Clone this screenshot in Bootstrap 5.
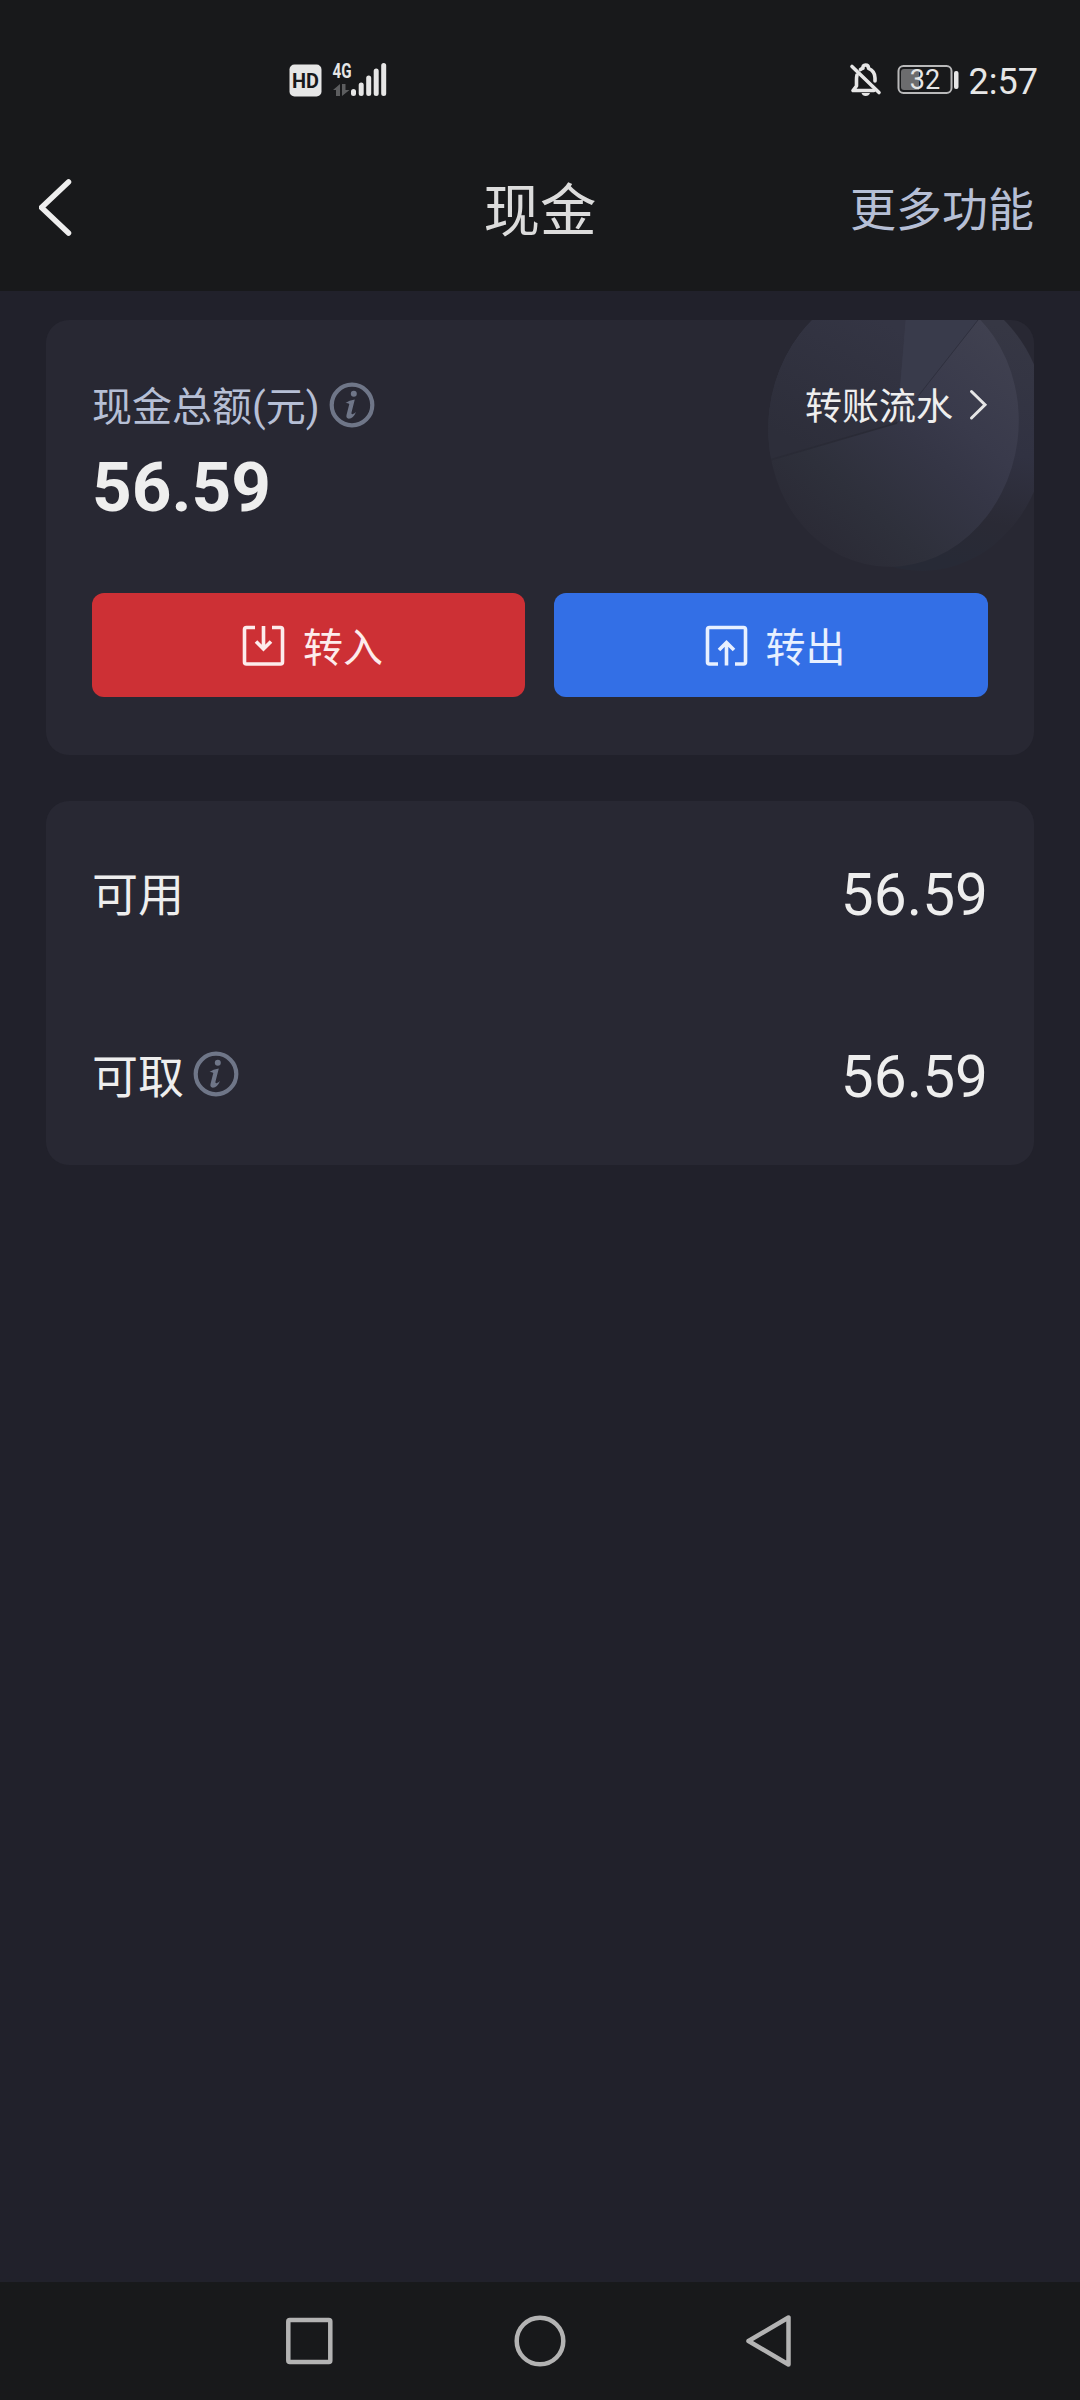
<!DOCTYPE html>
<html lang="zh-CN" data-bs-theme="dark">
<head>
<meta charset="utf-8">
<meta name="viewport" content="width=device-width, initial-scale=1">
<title>现金</title>
<link href="https://cdn.jsdelivr.net/npm/bootstrap@5.3.0/dist/css/bootstrap.min.css" rel="stylesheet">
<style>
body{background:#21212b;color:#eee;font-family:Roboto,"Noto Sans CJK SC",sans-serif;height:2400px;overflow:hidden}
svg{display:block;flex:none}
.bar-dark{background:#18191b}
.status-row{height:106px;padding:50px 42px 0 289px}
.status-time{font-size:36px;line-height:60px;margin-left:9px;padding-top:2px;color:#e6e6e6}
.title-row{height:185px;padding:0 46px 0 39px}
.title-side{flex:1 1 0}
.page-title{font-size:56.5px;line-height:80px;color:#dcdcdc;padding:58px 0 0 7px}
.more-link{font-size:46px;line-height:60px;color:#b6bfd5;padding-top:66px}
.page-body{padding:29px 46px 0;gap:46px}
.panel{background:#282833;border:0;border-radius:23px;overflow:hidden}
.panel-cash{height:435px;padding:60px 46px 0}
.panel-list{height:364px;padding:0 46px}
.pie-art{position:absolute;right:0;top:0}
.cash-label{font-size:40px;line-height:44px;padding-top:6px;color:#b6bfd5}
.info-icon{margin-left:9px}
.flow-link{font-size:37px;line-height:44px;color:#eee}
.flow-link span{padding-top:6px}
.flow-link svg{margin-left:15px}
.cash-total{font-size:69.3px;line-height:80px;font-weight:700;margin-top:18px}
.act-row{gap:29px;margin-top:65px}
.act{height:104px;border:0;border-radius:12px;font-size:40px;line-height:50px;flex:1 1 0;gap:18px;padding:2px 0 0 8px}
.act span{padding-top:6px}
.act-in{background:#cd3035;color:#fdecec;flex:0 0 433px}
.act-out{background:#336fe6;color:#e8f0ff}
.list-line{height:182px}
.list-line .lbl{font-size:46px;line-height:60px;padding-top:5px}
.list-line .num{font-size:58.6px;line-height:68px;padding-top:5px}
.sys-nav{height:118px}
</style>
<script src="https://cdn.jsdelivr.net/npm/bootstrap@5.3.0/dist/js/bootstrap.bundle.min.js"></script>
</head>
<body class="d-flex flex-column">
<svg width="0" height="0" class="position-absolute" aria-hidden="true">
  <symbol id="info" viewBox="0 0 46 46">
    <circle cx="23" cy="23" r="20.3" fill="none" stroke="#6f7688" stroke-width="4.2"/>
    <circle cx="24.8" cy="11.7" r="3" fill="#6f7688"/>
    <path d="M16.500 21Q20 18 25.800 17.400L22.500 30.500Q22 32.800 24 32Q25.500 31.400 27 30Q24.500 36.400 19.800 36.700Q16.800 36.400 17.500 33L20.300 22Q19 20.800 16.500 21Z" fill="#6f7688"/>
  </symbol>
</svg>
<header class="bar-dark">
  <div class="status-row d-flex align-items-start">
    <svg width="100" height="50" viewBox="289 50 100 50">
      <rect x="289.500" y="64.500" width="32" height="32" rx="5" fill="#e6e6e6"/>
      <text x="305.500" y="87.500" text-anchor="middle" font-family="Roboto" font-weight="700" font-size="21" textLength="27" lengthAdjust="spacingAndGlyphs" fill="#18191b">HD</text>
      <text x="332.500" y="77.500" font-family="Roboto" font-weight="700" font-size="20" textLength="19" lengthAdjust="spacingAndGlyphs" fill="#e6e6e6">4G</text>
      <path d="M333 90L340 84V96H336V90ZM342 84H345.500V90H349.500L342 96Z" fill="#5c5d5f"/>
      <path d="M353.500 91.500V93.500M361.200 85V93.500M368.700 78V93.500M376.200 71V93.500M383.700 65.500V93.500" stroke="#e6e6e6" stroke-width="5" stroke-linecap="round"/>
    </svg>
    <svg class="ms-auto" width="111" height="50" viewBox="849 50 111 50">
      <g fill="none" stroke="#e6e6e6" stroke-width="3.600" stroke-linecap="round" stroke-linejoin="round">
        <path d="M852 66.500L879 92.500"/>
        <path d="M857 75Q856.500 77 856.500 80V86L853 90.500H874"/>
        <path d="M860.500 69.500Q862 68.500 863 68.300Q862.500 65 865.500 65Q868.500 65 868.500 68.300Q875 71 875 78V81"/>
      </g>
      <path d="M861.500 93H870Q869 96 865.700 96T861.500 93Z" fill="#e6e6e6"/>
      <rect x="898.500" y="66" width="53" height="27" rx="5" fill="none" stroke="#b9b9ba" stroke-width="2"/>
      <path d="M904 69H919V90H904Q901 90 901 87V72Q901 69 904 69Z" fill="#6c6c6e"/>
      <text x="925" y="89" text-anchor="middle" font-family="Roboto" font-size="27" fill="#e6e6e6">32</text>
      <rect x="954" y="71" width="4.500" height="18" rx="2" fill="#e6e6e6"/>
    </svg>
    <span class="status-time">2:57</span>
  </div>
  <div class="title-row d-flex align-items-start pt-2">
    <div class="title-side"><svg width="33" height="177" viewBox="39 114 33 177"><path d="M68.500 182L41.500 207.500L68.500 233" fill="none" stroke="#eee" stroke-width="5.500" stroke-linecap="round" stroke-linejoin="round"/></svg></div>
    <h1 class="page-title fw-normal mb-0">现金</h1>
    <a class="more-link title-side text-end text-decoration-none" href="#">更多功能</a>
  </div>
</header>
<main class="page-body d-flex flex-column flex-grow-1">
  <section class="card panel panel-cash">
    <svg class="pie-art" width="274" height="260" viewBox="760 320 274 260">
      <defs>
        <linearGradient id="back" gradientUnits="userSpaceOnUse" x1="1020" y1="330" x2="960" y2="565"><stop offset="0" stop-color="#363744"/><stop offset=".5" stop-color="#313242"/><stop offset=".8" stop-color="#2a2a35"/><stop offset="1" stop-color="#272a36"/></linearGradient>
        <linearGradient id="main" gradientUnits="userSpaceOnUse" x1="1000" y1="330" x2="820" y2="540"><stop offset="0" stop-color="#404150"/><stop offset=".35" stop-color="#393a4b"/><stop offset=".5" stop-color="#353646"/><stop offset=".8" stop-color="#2e303b"/><stop offset="1" stop-color="#2b2b36"/></linearGradient>
        <linearGradient id="left" gradientUnits="userSpaceOnUse" x1="880" y1="320" x2="810" y2="450"><stop offset="0" stop-color="#343544"/><stop offset="1" stop-color="#2d2e3a"/></linearGradient>
        <clipPath id="disc"><ellipse cx="893.500" cy="425" rx="125" ry="142" transform="rotate(7 893.500 425)"/></clipPath>
      </defs>
      <ellipse cx="922" cy="428" rx="125" ry="143" fill="url(#back)"/>
      <g clip-path="url(#disc)">
        <path d="M760 270H1040V580H760Z" fill="url(#main)"/>
        <path d="M897 423L773 459L740 470V270H910Z" fill="url(#left)"/>
        <path d="M897 423L906 320L910 280H1010L978 320Z" fill="#393b4b"/>
        <path d="M897 423L978 320" stroke="#2f303e" stroke-width="1"/>
        <path d="M897 423L770 460" stroke="#2a2b36" stroke-width="1.500"/>
      </g>
    </svg>
    <div class="d-flex align-items-center position-relative">
      <span class="cash-label">现金总额(元)</span>
      <svg class="info-icon" width="46" height="46"><use href="#info"/></svg>
      <a class="flow-link ms-auto d-flex align-items-center text-decoration-none" href="#"><span>转账流水</span>
        <svg width="20" height="34" viewBox="968 388 20 34"><path d="M971.500 391.500L985 404.700L971.500 418" fill="none" stroke="#e6e6e6" stroke-width="3" stroke-linecap="round"/></svg></a>
    </div>
    <div class="cash-total">56.59</div>
    <div class="act-row d-flex">
      <button class="btn act act-in d-flex align-items-center justify-content-center" type="button">
        <svg width="43" height="42" viewBox="0 0 43 42" fill="none" stroke="currentColor" stroke-width="3.600"><path d="M13 2.500H4.500Q2.500 2.500 2.500 4.500V37Q2.500 39 4.500 39H38.500Q40.500 39 40.500 37V4.500Q40.500 2.500 38.500 2.500H30"/><path d="M21.500 1V24M14 16.500L21.500 24L29 16.500"/></svg>
        <span>转入</span></button>
      <button class="btn act act-out d-flex align-items-center justify-content-center" type="button">
        <svg width="43" height="42" viewBox="0 0 43 42" fill="none" stroke="currentColor" stroke-width="3.600"><path d="M13 39H4.500Q2.500 39 2.500 37V4.500Q2.500 2.500 4.500 2.500H38.500Q40.500 2.500 40.500 4.500V37Q40.500 39 38.500 39H30"/><path d="M21.500 40.500V17.500M14 25L21.500 17.500L29 25"/></svg>
        <span>转出</span></button>
    </div>
  </section>
  <section class="card panel panel-list">
    <div class="list-line d-flex align-items-center"><span class="lbl">可用</span><span class="num ms-auto">56.59</span></div>
    <div class="list-line d-flex align-items-center"><span class="lbl">可取</span><svg class="info-icon" width="46" height="46"><use href="#info"/></svg><span class="num ms-auto">56.59</span></div>
  </section>
</main>
<footer class="sys-nav bar-dark d-flex justify-content-center">
  <svg width="520" height="118" viewBox="280 2282 520 118" fill="none" stroke="#b3b3b3" stroke-width="4.500" stroke-linejoin="round">
    <rect x="288.300" y="2320" width="42" height="42" rx="1.500"/>
    <circle cx="540" cy="2341" r="23.300"/>
    <path d="M748.500 2341L788.500 2317.500V2364.500Z"/>
  </svg>
</footer>
</body>
</html>
